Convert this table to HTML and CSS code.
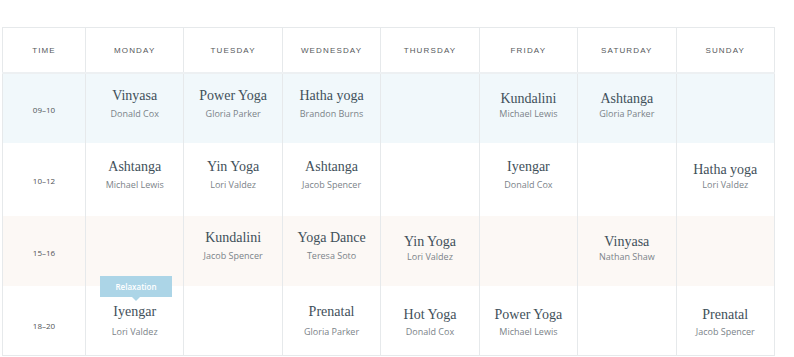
FILE: index.html
```html
<!DOCTYPE html>
<html lang="en">
<head>
    <meta charset="UTF-8">
    <meta name="viewport" content="width=device-width, initial-scale=1.0">
    <title>Yoga Timetable</title>
    <link rel="stylesheet" href="styles.css">
</head>
<body>
    <div class="container">
        <table class="timetable">
            <colgroup>
                <col class="col-time">
                <col span="7">
            </colgroup>
            <thead>
                <tr>
                    <th>Time</th>
                    <th>Monday</th>
                    <th>Tuesday</th>
                    <th>Wednesday</th>
                    <th>Thursday</th>
                    <th>Friday</th>
                    <th>Saturday</th>
                    <th>Sunday</th>
                </tr>
            </thead>
            <tbody>
                <tr class="row-blue">
                    <td class="time">09–10</td>
                    <td><div class="event"><div class="event-title">Vinyasa</div><div class="event-teacher">Donald Cox</div></div></td>
                    <td><div class="event"><div class="event-title">Power Yoga</div><div class="event-teacher">Gloria Parker</div></div></td>
                    <td><div class="event"><div class="event-title">Hatha yoga</div><div class="event-teacher">Brandon Burns</div></div></td>
                    <td></td>
                    <td><div class="event tight"><div class="event-title">Kundalini</div><div class="event-teacher">Michael Lewis</div></div></td>
                    <td><div class="event tight"><div class="event-title">Ashtanga</div><div class="event-teacher">Gloria Parker</div></div></td>
                    <td></td>
                </tr>
                <tr class="row-tall">
                    <td class="time">10–12</td>
                    <td><div class="event"><div class="event-title">Ashtanga</div><div class="event-teacher">Michael Lewis</div></div></td>
                    <td><div class="event"><div class="event-title">Yin Yoga</div><div class="event-teacher">Lori Valdez</div></div></td>
                    <td><div class="event"><div class="event-title">Ashtanga</div><div class="event-teacher">Jacob Spencer</div></div></td>
                    <td></td>
                    <td><div class="event"><div class="event-title">Iyengar</div><div class="event-teacher">Donald Cox</div></div></td>
                    <td></td>
                    <td><div class="event tight"><div class="event-title">Hatha yoga</div><div class="event-teacher">Lori Valdez</div></div></td>
                </tr>
                <tr class="row-cream">
                    <td class="time">15–16</td>
                    <td></td>
                    <td><div class="event"><div class="event-title">Kundalini</div><div class="event-teacher">Jacob Spencer</div></div></td>
                    <td><div class="event"><div class="event-title">Yoga Dance</div><div class="event-teacher">Teresa Soto</div></div></td>
                    <td><div class="event tight"><div class="event-title">Yin Yoga</div><div class="event-teacher">Lori Valdez</div></div></td>
                    <td></td>
                    <td><div class="event tight"><div class="event-title">Vinyasa</div><div class="event-teacher">Nathan Shaw</div></div></td>
                    <td></td>
                </tr>
                <tr class="row-last">
                    <td class="time">18–20</td>
                    <td class="has-tip">
                        <span class="tip">Relaxation</span>
                        <div class="event"><div class="event-title">Iyengar</div><div class="event-teacher">Lori Valdez</div></div>
                    </td>
                    <td></td>
                    <td><div class="event"><div class="event-title">Prenatal</div><div class="event-teacher">Gloria Parker</div></div></td>
                    <td><div class="event tight"><div class="event-title">Hot Yoga</div><div class="event-teacher">Donald Cox</div></div></td>
                    <td><div class="event tight"><div class="event-title">Power Yoga</div><div class="event-teacher">Michael Lewis</div></div></td>
                    <td></td>
                    <td><div class="event tight"><div class="event-title">Prenatal</div><div class="event-teacher">Jacob Spencer</div></div></td>
                </tr>
            </tbody>
        </table>
    </div>
</body>
</html>
```

FILE: styles.css
```css
:root {
    --line: #e6e9eb;
    --blue: #f1f8fb;
    --cream: #fcf8f5;
    --title: #3f505a;
    --muted: #7b8389;
    --tip: #acd5e7;
}

* {
    box-sizing: border-box;
    margin: 0;
    padding: 0;
}

body {
    font-family: "Open Sans", sans-serif;
    background: #fff;
    color: #555;
}

.container {
    padding: 27px 0 0 2px;
}

.timetable {
    width: 773px;
    table-layout: fixed;
    border-collapse: collapse;
    border: 1px solid var(--line);
}

.col-time {
    width: 83px;
}

.timetable th,
.timetable td {
    border-left: 1px solid var(--line);
    text-align: center;
    vertical-align: middle;
}

.timetable th {
    height: 45px;
    padding-top: 1px;
    font-family: "Liberation Sans", Arial, sans-serif;
    font-size: 8px;
    font-weight: normal;
    letter-spacing: 1.15px;
    text-transform: uppercase;
    color: #55585b;
    border-bottom: 2px solid #edf0f2;
}

.timetable td {
    height: 70px;
}

.row-tall td {
    height: 73px;
}

.row-blue td { background: var(--blue); }
.row-cream td { background: var(--cream); }

.row-last td {
    padding-top: 10px;
}

.time {
    font-size: 8px;
    color: #4f5356;
    padding-top: 3px;
}

.event {
    padding-bottom: 8px;
}

.event-title {
    font-family: "Liberation Serif", "Times New Roman", serif;
    font-size: 14px;
    line-height: 16px;
    color: var(--title);
    margin-bottom: 3px;
}

.event-teacher {
    font-size: 9px;
    line-height: 14px;
    color: var(--muted);
}

.tight {
    padding-top: 4px;
}

.tight .event-title {
    margin-bottom: 0;
}

.row-last .event-title {
    margin-bottom: 5px;
}

.row-last .tight .event-title {
    margin-bottom: 2px;
}

.has-tip {
    position: relative;
}

.tip {
    position: absolute;
    top: -10px;
    left: 14px;
    width: 72px;
    height: 21px;
    line-height: 21px;
    background: var(--tip);
    color: #fff;
    font-size: 8px;
    font-weight: 600;
}

.tip::after {
    content: "";
    position: absolute;
    left: 50%;
    bottom: -4px;
    margin-left: -4px;
    border-left: 4px solid transparent;
    border-right: 4px solid transparent;
    border-top: 4px solid var(--tip);
}
```
